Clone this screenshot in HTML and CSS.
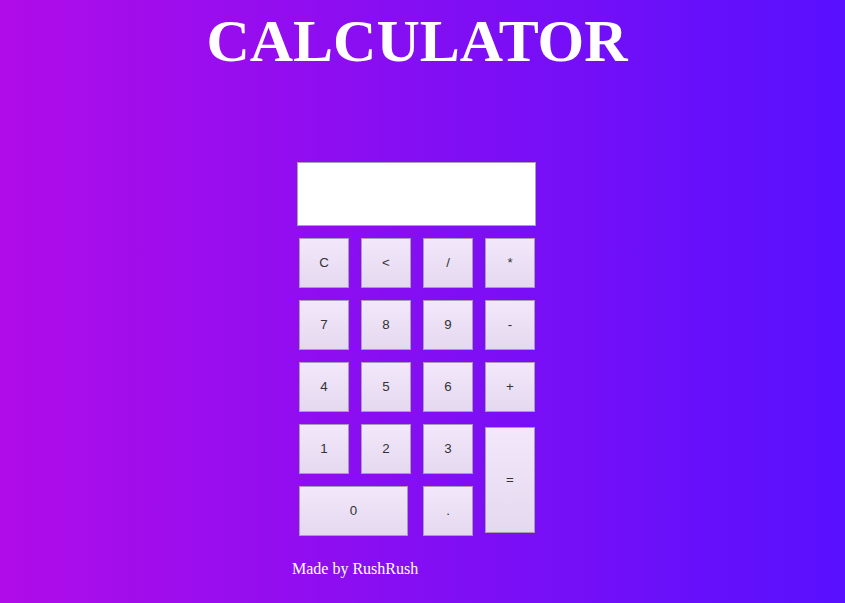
FILE: index.html
```html
<!DOCTYPE html>
<html>
<head>
<meta charset="utf-8">
<title>Calculator</title>
<link rel="stylesheet" href="styles.css">
</head>
<body>
<div class="page">
  <h1 class="title">CALCULATOR</h1>
  <div class="calc">
    <div class="display"></div>
    <div class="keys">
      <button class="key">C</button>
      <button class="key">&lt;</button>
      <button class="key">/</button>
      <button class="key">*</button>
      <button class="key">7</button>
      <button class="key">8</button>
      <button class="key">9</button>
      <button class="key">-</button>
      <button class="key">4</button>
      <button class="key">5</button>
      <button class="key">6</button>
      <button class="key">+</button>
      <button class="key">1</button>
      <button class="key">2</button>
      <button class="key">3</button>
      <button class="key key-eq">=</button>
      <button class="key key-zero">0</button>
      <button class="key">.</button>
    </div>
    <p class="footer">Made by RushRush</p>
  </div>
</div>
</body>
</html>
```

FILE: styles.css
```css
html, body {
  margin: 0;
  padding: 0;
}

body {
  min-height: 603px;
  background: linear-gradient(to right, #b00ce8, #5810fe);
  font-family: "Liberation Serif", "Times New Roman", serif;
  color: #fff;
}

.page {
  width: 834px;
  display: flex;
  flex-direction: column;
  align-items: center;
}

.title {
  margin: 7px 0 0;
  font-size: 60px;
  line-height: 69px;
  font-weight: bold;
  color: #fff;
}

.calc {
  width: 250px;
  margin-top: 86px;
}

.display {
  box-sizing: border-box;
  width: 239px;
  height: 64px;
  margin-left: 5px;
  background: #fff;
  border: 1px solid #aaa2b4;
}

.keys {
  margin-top: 12px;
  padding-left: 7px;
  display: grid;
  grid-template-columns: repeat(4, 50px);
  grid-auto-rows: 50px;
  gap: 12px;
}

.key {
  box-sizing: border-box;
  margin: 0;
  padding: 0 0 2px;
  width: 50px;
  height: 50px;
  border: 1px solid #a79cb3;
  background: linear-gradient(#f3e7fc, #e5d9ef);
  font-family: "Liberation Sans", Arial, sans-serif;
  font-size: 13.333px;
  color: #333;
}

.key-eq {
  grid-column: 4;
  grid-row: 4 / span 2;
  align-self: center;
  height: 106px;
}

.key-zero {
  grid-column: 1 / span 2;
  width: 109px;
}

.footer {
  margin: 24px 0 0;
  font-size: 16px;
  line-height: normal;
  color: #fff;
}
```
